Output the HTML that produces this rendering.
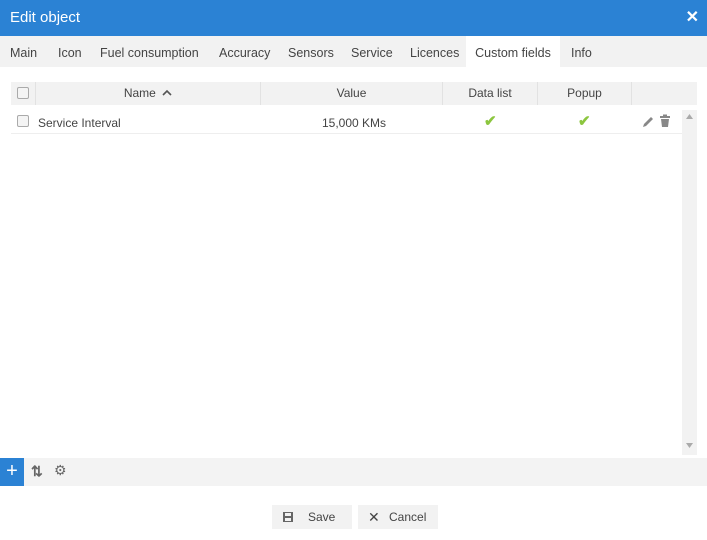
<!DOCTYPE html>
<html><head><meta charset="utf-8"><style>
*{box-sizing:border-box;margin:0;padding:0}
body{width:707px;height:540px;background:#fff;font-family:"Liberation Sans",sans-serif;font-size:12px;color:#444;position:relative;overflow:hidden}
.abs{position:absolute}
.title{left:0;top:0;width:707px;height:36px;background:#2b82d4;color:#fff;font-size:15px;line-height:36px;padding-left:10px}
.close{right:8px;top:0;color:#fff;font-size:16px;font-weight:bold;line-height:36px}
.tabs{left:0;top:36px;width:707px;height:31px;background:#f2f2f2}
.tab{position:absolute;top:0;height:31px;line-height:34px;font-size:12.5px;color:#444}
.hdr{left:11px;top:82px;width:686px;height:23px;background:#f2f2f2}
.hc{position:absolute;top:0;height:23px;line-height:23px;text-align:center;border-right:1px solid #e2e2e2;font-size:12px;color:#444}
.cb{position:absolute;width:12px;height:12px;border:1px solid #aaa;border-radius:2px;background:#f4f4f4}
.row{left:11px;top:110px;width:671px;height:24px;border-bottom:1px solid #eee}
.chk{position:absolute;color:#8cc63f;font-size:15px;font-weight:bold}
.sb{left:682px;top:110px;width:15px;height:345px;background:#f2f2f2}
.bar{left:0;top:458px;width:707px;height:28px;background:#f3f3f3}
.btn{top:505px;height:24px;background:#f2f2f2;font-size:12px;line-height:24px;color:#444}
</style></head><body>
<div class="abs title">Edit object</div>
<div class="abs close">✕</div>
<div class="abs tabs">
<span class="tab" style="left:10px">Main</span>
<span class="tab" style="left:58px">Icon</span>
<span class="tab" style="left:100px">Fuel consumption</span>
<span class="tab" style="left:219px">Accuracy</span>
<span class="tab" style="left:288px">Sensors</span>
<span class="tab" style="left:351px">Service</span>
<span class="tab" style="left:410px">Licences</span>
<span class="tab" style="left:466px;width:94px;background:#fff;text-align:center">Custom fields</span>
<span class="tab" style="left:571px">Info</span>
</div>
<div class="abs hdr">
<div class="hc" style="left:0;width:25px"><span class="cb" style="left:6px;top:5px"></span></div>
<div class="hc" style="left:25px;width:225px">Name <svg width="10" height="8" viewBox="0 0 10 8" style="margin-left:3px"><path d="M1 6L5 2L9 6" stroke="#555" stroke-width="1.6" fill="none"/></svg></div>
<div class="hc" style="left:250px;width:182px">Value</div>
<div class="hc" style="left:432px;width:95px">Data list</div>
<div class="hc" style="left:527px;width:94px">Popup</div>
</div>
<div class="abs row">
<span class="cb" style="left:6px;top:5px"></span>
<span style="position:absolute;left:27px;top:6px">Service Interval</span>
<span style="position:absolute;left:311px;top:6px">15,000 KMs</span>
<span class="chk" style="left:473px;top:2px">✔</span>
<span class="chk" style="left:567px;top:2px">✔</span>
<svg class="abs" style="left:630px;top:5px" width="14" height="14" viewBox="0 0 14 14"><path d="M2 12L3 9L10 2L12 4L5 11Z" fill="#888"/></svg>
<svg class="abs" style="left:648px;top:4px" width="12" height="14" viewBox="0 0 12 14"><rect x="1" y="2" width="10" height="2" fill="#888"/><rect x="4" y="0.5" width="4" height="2" fill="#888"/><path d="M2 5H10L9 13H3Z" fill="#888"/></svg>
</div>
<div class="abs sb"><svg class="abs" style="left:4px;top:4px" width="7" height="5"><path d="M0 5L3.5 0L7 5Z" fill="#aaa"/></svg><svg class="abs" style="left:4px;top:333px" width="7" height="5"><path d="M0 0L3.5 5L7 0Z" fill="#aaa"/></svg></div>
<div class="abs bar">
<div class="abs" style="left:0;top:0;width:24px;height:28px;background:#2b82d4;color:#fff;font-size:20px;line-height:27px;text-align:center">+</div>
<span class="abs" style="left:31px;top:5px;color:#666;font-size:14px;font-weight:bold">⇅</span>
<span class="abs" style="left:54px;top:4px;color:#666;font-size:14px">⚙</span>
</div>
<div class="abs btn" style="left:272px;width:80px"><svg class="abs" style="left:11px;top:7px" width="10" height="10" viewBox="0 0 10 10"><rect x="0" y="0" width="10" height="10" fill="#666"/><rect x="2" y="1" width="6" height="3" fill="#f2f2f2"/><rect x="2" y="6" width="6" height="3" fill="#f2f2f2"/></svg><span class="abs" style="left:36px">Save</span></div>
<div class="abs btn" style="left:358px;width:80px"><span class="abs" style="left:10px;font-size:14px">✕</span><span class="abs" style="left:31px">Cancel</span></div>
</body></html>
